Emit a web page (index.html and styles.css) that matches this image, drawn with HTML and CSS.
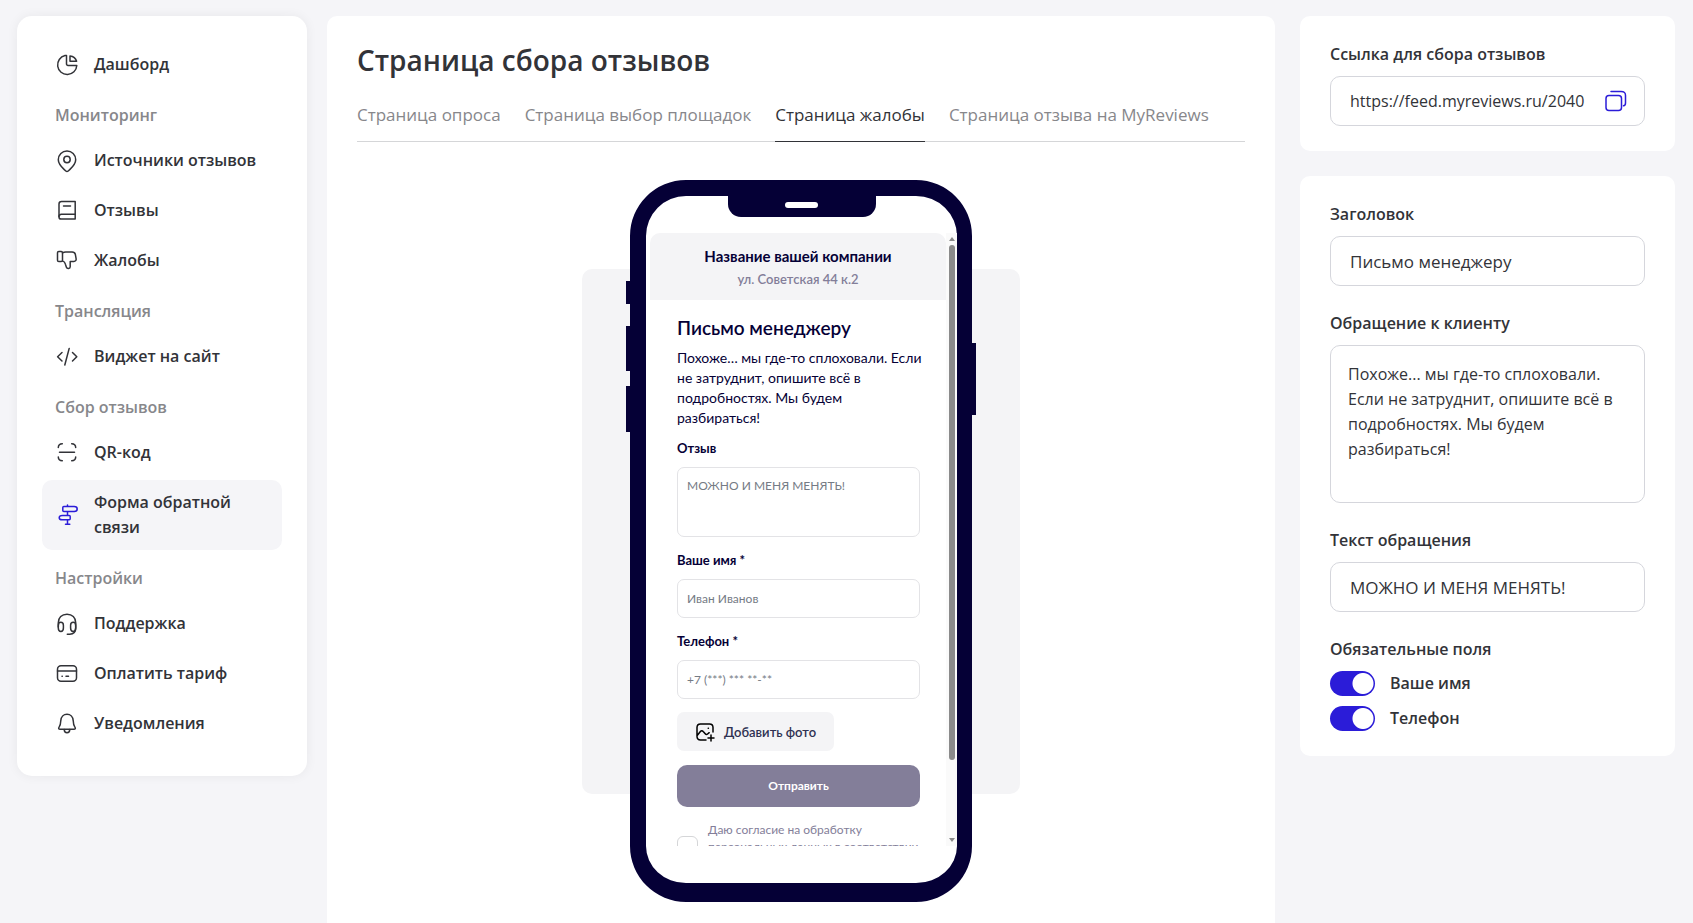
FILE: index.html
```
<!DOCTYPE html>
<html lang="ru">
<head>
    <meta charset="UTF-8">
    <meta name="viewport" content="width=device-width, initial-scale=1.0">
    <title>Страница сбора отзывов</title>
    <link rel="stylesheet" href="styles.css">
</head>
<body>
    <div class="layout">
        <!-- Боковое меню -->
        <nav class="sidebar">
            <a class="menu-item" href="#">
                <svg class="icon" viewBox="0 0 24 24"><path d="M11.5 2.500v8.500a1.500 1.500 0 0 0 1.500 1.500h8.800A9.600 9.600 0 1 1 10 2.600c.8-.2 1.500-.1 1.500-.1z"/><path d="M15 2.900v5.400h6.600C20.800 5.500 18.500 3.300 15 2.900z"/></svg>
                <span>Дашборд</span>
            </a>
            <h3 class="menu-title">Мониторинг</h3>
            <a class="menu-item" href="#">
                <svg class="icon" viewBox="0 0 24 24"><path d="M12 2a8.700 8.700 0 0 0-8.700 8.700c0 4 2.700 6.800 6 9.900l1.500 1.400a1.800 1.800 0 0 0 2.400 0l1.500-1.400c3.300-3.100 6-5.900 6-9.900A8.700 8.700 0 0 0 12 2z"/><circle cx="12" cy="10.500" r="3.200"/></svg>
                <span>Источники отзывов</span>
            </a>
            <a class="menu-item" href="#">
                <svg class="icon" viewBox="0 0 24 24"><path d="M6.500 2.500h13.700v17.600H6.200A2.200 2.200 0 0 1 4 17.900V5A2.500 2.500 0 0 1 6.500 2.500z"/><path d="M4 17.500a2.400 2.400 0 0 1 2.400-2.300h13.800M8.500 7.100h7"/></svg>
                <span>Отзывы</span>
            </a>
            <a class="menu-item" href="#">
                <svg class="icon" viewBox="0 0 24 24"><path d="M3.800 2.500h2.400c1 0 1.300.4 1.300 1.300v7.500c0 .9-.4 1.300-1.300 1.300H3.800c-.9 0-1.300-.4-1.300-1.300V3.800c0-.9.4-1.300 1.300-1.300z"/><path d="M7.500 3.800c1-.6 2-.9 3.200-.9h6.500c1.700 0 2.700.7 3.100 2.300l.8 4.500c.3 1.600-.6 2.700-2.200 2.700h-3.700v5.400c0 2-3.200 2.300-3.800.4l-.9-2.800c-.4-1.600-1.400-2.900-3-3.500"/></svg>
                <span>Жалобы</span>
            </a>
            <h3 class="menu-title">Трансляция</h3>
            <a class="menu-item" href="#">
                <svg class="icon" viewBox="0 0 24 24"><path d="M7 7.500 2.600 11.700 7 16M17.500 7.500l4.300 4.200-4.300 4.300M14.200 3.400 9.800 20"/></svg>
                <span>Виджет на сайт</span>
            </a>
            <h3 class="menu-title">Сбор отзывов</h3>
            <a class="menu-item" href="#">
                <svg class="icon" viewBox="0 0 24 24"><path d="M3.300 6.500c.1-2.800 1-3.700 4-3.800M16.700 2.700c3 .1 3.900 1 4 3.800M20.700 16c-.1 2.800-1 3.700-4 3.800M7.300 19.800c-3-.1-3.900-1-4-3.800M4.500 11.300h15"/></svg>
                <span>QR-код</span>
            </a>
            <a class="menu-item active" href="#">
                <svg class="icon" viewBox="0 0 24 24"><path d="M12.500 2v1.500M12.500 8.500v4M12.500 16.800V21M10.500 21.300h4.300M8.800 3.500h10.400c1.800 0 3 1.100 3 2.500s-1.200 2.500-3 2.500H8.800a1 1 0 0 1-1-1v-3a1 1 0 0 1 1-1zM14.200 12.500a1 1 0 0 1 1 1v2.300a1 1 0 0 1-1 1H7.500c-1.900 0-3.300-.8-3.300-2.100s1.400-2.200 3.300-2.200z"/></svg>
                <span>Форма обратной связи</span>
            </a>
            <h3 class="menu-title">Настройки</h3>
            <a class="menu-item" href="#">
                <svg class="icon" viewBox="0 0 24 24"><path d="M3.300 15V10.700C3.300 5.700 6.800 2.200 12 2.200s8.700 3.500 8.700 8.500V16c0 3.800-2.200 6.200-6 6.200h-2.400"/><path d="M3.300 13.500c0-2.400 1-3.200 2.500-3.200s2.600.8 2.600 2.900V16c0 2.300-1 3.400-2.500 3.400s-2.600-.9-2.600-3.400zM20.700 13.500c0-2.400-1-3.200-2.500-3.200s-2.600.8-2.600 2.900V16c0 2.300 1 3.400 2.500 3.400s2.600-.9 2.600-3.400z"/></svg>
                <span>Поддержка</span>
            </a>
            <a class="menu-item" href="#">
                <svg class="icon" viewBox="0 0 24 24"><rect x="2.500" y="3.800" width="19" height="15.400" rx="3.500"/><path d="M2.500 9h19M7 14.300h.3M11 14.300h2.500"/></svg>
                <span>Оплатить тариф</span>
            </a>
            <a class="menu-item" href="#">
                <svg class="icon" viewBox="0 0 24 24"><path d="M12 2.300c-3.400 0-6 2.700-6.200 6.300-.1 3-.2 4.600-1.700 6.500-.9 1.200-.4 2.200 1 2.200h13.800c1.400 0 1.900-1 1-2.200-1.500-1.900-1.600-3.500-1.700-6.500C18 5 15.400 2.300 12 2.300z"/><path d="M9.200 17.500c.1 4.300 5.500 4.300 5.600 0"/></svg>
                <span>Уведомления</span>
            </a>
        </nav>

        <!-- Предпросмотр страницы -->
        <main class="content">
            <h1>Страница сбора отзывов</h1>
            <div class="tabs">
                <a class="tab" href="#">Страница опроса</a>
                <a class="tab" href="#">Страница выбор площадок</a>
                <a class="tab active" href="#">Страница жалобы</a>
                <a class="tab" href="#">Страница отзыва на MyReviews</a>
            </div>

            <div class="preview">
                <div class="phone">
                    <span class="phone-key key-mute"></span>
                    <span class="phone-key key-up"></span>
                    <span class="phone-key key-down"></span>
                    <span class="phone-key key-power"></span>
                    <div class="notch"><span class="speaker"></span></div>
                    <div class="screen">
                        <div class="page">
                            <header class="company">
                                <p class="company-name">Название вашей компании</p>
                                <p class="company-address">ул. Советская 44 к.2</p>
                            </header>
                            <form class="complaint">
                                <h2>Письмо менеджеру</h2>
                                <p class="complaint-text">Похоже… мы где-то сплоховали. Если не затруднит, опишите всё в подробностях. Мы будем разбираться!</p>
                                <label for="review">Отзыв</label>
                                <textarea id="review" placeholder="МОЖНО И МЕНЯ МЕНЯТЬ!"></textarea>
                                <label for="name">Ваше имя *</label>
                                <input type="text" id="name" placeholder="Иван Иванов">
                                <label for="phone">Телефон *</label>
                                <input type="tel" id="phone" placeholder="+7 (***) *** **-**">
                                <button type="button" class="add-photo">
                                    <svg viewBox="0 0 20 20"><path d="M18 10V5.500C18 3 17 2 14.500 2h-9C3 2 2 3 2 5.500v8.800C2 17 3 18 5.500 18H11M2.200 13.500l3.200-4c.8-1 2-1 2.800 0l2 2.300c.7.8 1.600.9 2.400.2l1.600-1.300M16 13v6M13 16h6M13.200 6.200h.2"/></svg>
                                    <span>Добавить фото</span>
                                </button>
                                <button type="button" class="send">Отправить</button>
                                <div class="consent">
                                    <input type="checkbox" id="consent">
                                    <label for="consent">Даю согласие на обработку персональных данных в соответствии с политикой</label>
                                </div>
                            </form>
                        </div>
                        <div class="scrollbar">
                            <span class="arrow-up"></span>
                            <span class="thumb"></span>
                            <span class="arrow-down"></span>
                        </div>
                    </div>
                </div>
            </div>
        </main>

        <!-- Настройки формы -->
        <aside class="settings">
            <section class="card">
                <label class="field-title" for="link">Ссылка для сбора отзывов</label>
                <div class="link-box">
                    <input type="text" id="link" value="https://feed.myreviews.ru/20401">
                    <button type="button" class="copy" aria-label="Скопировать">
                        <svg viewBox="0 0 24 24"><rect x="2" y="6.500" width="15.500" height="15" rx="3"/><path d="M7 2.500h10c3.500 0 4.500 1 4.500 4V14c0 1.700-.6 2.600-2 2.800"/></svg>
                    </button>
                </div>
            </section>

            <section class="card">
                <label class="field-title" for="title">Заголовок</label>
                <input class="field" type="text" id="title" value="Письмо менеджеру">
                <label class="field-title" for="message">Обращение к клиенту</label>
                <textarea class="field" id="message">Похоже... мы где-то сплоховали. Если не затруднит, опишите всё в подробностях. Мы будем разбираться!</textarea>
                <label class="field-title" for="hint">Текст обращения</label>
                <input class="field" type="text" id="hint" value="МОЖНО И МЕНЯ МЕНЯТЬ!">
                <h4 class="field-title">Обязательные поля</h4>
                <label class="switch"><input type="checkbox" checked> <span>Ваше имя</span></label>
                <label class="switch"><input type="checkbox" checked> <span>Телефон</span></label>
            </section>
        </aside>
    </div>
</body>
</html>
```
FILE: styles.css
```
* {
    box-sizing: border-box;
}
body {
    margin: 0;
    background-color: #f5f5f8;
    color: #323338;
    font-family: "Open Sans", "Noto Sans", sans-serif;
    font-size: 17px;
    line-height: 25px;
}
h1, h2, h3, h4, p {
    margin: 0;
}
a {
    color: inherit;
    text-decoration: none;
}
input, textarea, button {
    font: inherit;
    color: inherit;
}
svg {
    fill: none;
    stroke: currentColor;
    stroke-width: 1.5;
    stroke-linecap: round;
    stroke-linejoin: round;
}
.layout {
    display: flex;
    align-items: flex-start;
    min-height: 100vh;
    padding: 16px 18px 0 17px;
}

/* меню */
.sidebar {
    flex: 0 0 290px;
    margin-right: 20px;
    padding: 26px 25px 30px;
    border-radius: 15px;
    background-color: #fff;
    box-shadow: 0 0 12px rgba(0, 0, 0, 0.06);
}
.menu-item {
    display: flex;
    align-items: center;
    gap: 15px;
    margin-bottom: 5px;
    padding: 10px 13px;
    border-radius: 10px;
    font-size: 16px;
    font-weight: 600;
}
.menu-item:last-child {
    margin-bottom: 0;
}
.menu-item.active {
    background-color: #f5f5f8;
}
.menu-item.active .icon {
    color: #2b1cd8;
}
.icon {
    flex: none;
    width: 24px;
    height: 24px;
}
.menu-title {
    padding-left: 13px;
    color: #87878b;
    font-size: 16px;
    font-weight: 600;
    line-height: 46px;
}

/* центральная часть */
.content {
    flex: 1;
    min-width: 0;
    min-height: calc(100vh - 16px);
    padding: 24px 30px 20px;
    border-radius: 10px 10px 0 0;
    background-color: #fff;
}
h1 {
    font-size: 28px;
    font-weight: 600;
    line-height: 40px;
}
.tabs {
    display: flex;
    gap: 24px;
    margin-top: 22px;
    border-bottom: 1px solid #d5d6d8;
}
.tab {
    margin-bottom: -1px;
    padding-bottom: 14px;
    border-bottom: 1px solid transparent;
    color: #87878b;
}
.tab.active {
    border-color: #323338;
    color: #323338;
}
.preview {
    display: flex;
    justify-content: center;
    width: 438px;
    height: 525px;
    margin: 127px auto 0;
    border-radius: 10px;
    background-color: #f4f4f6;
}

/* телефон */
.phone {
    position: relative;
    flex: none;
    width: 342px;
    height: 722px;
    margin-top: -89px;
    padding: 37px 0 0 4px;
    border: 16px solid #050036;
    border-right-width: 15px;
    border-bottom-width: 19px;
    border-radius: 56px;
    background-color: #fff;
    color: #050036;
    font-family: Lato, "Open Sans", sans-serif;
    font-size: 13px;
    line-height: 20px;
}
.phone-key {
    position: absolute;
    left: -20px;
    width: 4px;
    background-color: #050036;
}
.key-mute {
    top: 85px;
    height: 23px;
}
.key-up {
    top: 130px;
    height: 45px;
}
.key-down {
    top: 190px;
    height: 46px;
}
.key-power {
    top: 147px;
    left: auto;
    right: -19px;
    height: 72px;
}
.notch {
    position: absolute;
    top: -1px;
    left: 50%;
    display: flex;
    justify-content: center;
    width: 148px;
    height: 22px;
    margin-left: -74px;
    padding-top: 7px;
    border-radius: 0 0 13px 13px;
    background-color: #050036;
}
.speaker {
    width: 33px;
    height: 6px;
    border-radius: 3px;
    background-color: #fff;
}
.screen {
    display: flex;
    height: 613px;
    overflow: hidden;
}
.page {
    flex: 1;
}
.company {
    height: 67px;
    padding-top: 13px;
    border-radius: 10px 10px 0 0;
    background-color: #f4f4f6;
    text-align: center;
}
.company-name {
    font-size: 15px;
    font-weight: 700;
}
.company-address {
    padding-top: 3px;
    color: #837e99;
    font-size: 13px;
    font-weight: 600;
}
.complaint {
    display: flex;
    flex-direction: column;
    padding: 15px 26px 0 27px;
}
.complaint h2 {
    font-size: 19px;
    font-weight: 600;
    line-height: 26px;
}
.complaint-text {
    margin: 7px -4px 10px 0;
    font-size: 14px;
}
.complaint > label {
    margin-bottom: 9px;
    font-weight: 700;
}
.complaint > input, .complaint > textarea {
    width: 100%;
    height: 39px;
    margin: 0 0 13px;
    padding: 0 9px;
    border: 1px solid #e3e3e6;
    border-radius: 7px;
    outline: none;
    background-color: #fff;
    font-size: 12px;
    resize: none;
}
.complaint > textarea {
    height: 70px;
    padding-top: 8px;
}
::placeholder {
    color: #757b85;
    opacity: 1;
}
.add-photo {
    display: flex;
    align-items: center;
    align-self: flex-start;
    gap: 9px;
    height: 39px;
    padding: 0 18px;
    border: none;
    border-radius: 7px;
    background-color: #f4f4f6;
    color: #2f3152;
    font-weight: 600;
}
.add-photo svg {
    width: 20px;
    height: 20px;
    color: #000;
}
.send {
    height: 42px;
    margin-top: 14px;
    border: none;
    border-radius: 10px;
    background-color: #837e99;
    color: #fff;
    font-size: 12px;
    font-weight: 700;
}
.consent {
    display: flex;
    align-items: center;
    gap: 10px;
    margin-top: 14px;
    color: #837e99;
    font-size: 12px;
    line-height: 17px;
}
.consent input {
    flex: none;
    appearance: none;
    width: 21px;
    height: 21px;
    margin: 0;
    border: 1px solid #d5d6d8;
    border-radius: 6px;
}
.scrollbar {
    display: flex;
    flex-direction: column;
    align-items: center;
    width: 11px;
    padding: 4px 0;
    background-color: #fafafa;
}
.arrow-up, .arrow-down {
    border: 3px solid transparent;
}
.arrow-up {
    border-top: none;
    border-bottom: 4px solid #8b8b8b;
}
.arrow-down {
    margin-top: auto;
    border-bottom: none;
    border-top: 4px solid #8b8b8b;
}
.thumb {
    width: 6px;
    height: 515px;
    margin-top: 4px;
    border-radius: 3px;
    background-color: #8b8b8b;
}

/* правая колонка */
.settings {
    flex: 0 0 375px;
    margin-left: 25px;
}
.card {
    display: flex;
    flex-direction: column;
    margin-bottom: 25px;
    padding: 26px 30px 25px;
    border-radius: 10px;
    background-color: #fff;
}
.field-title {
    margin-bottom: 9px;
    font-size: 16px;
    font-weight: 600;
}
.field, .link-box {
    width: 100%;
    height: 50px;
    margin-bottom: 25px;
    padding: 0 19px;
    border: 1px solid #d5d6dc;
    border-radius: 10px;
    outline: none;
    background-color: #fff;
}
textarea.field {
    height: 158px;
    padding: 16px 17px;
    font-size: 16px;
    resize: none;
}
.link-box {
    display: flex;
    align-items: center;
    justify-content: space-between;
    margin-bottom: 0;
    padding-right: 16px;
}
.link-box input {
    width: 235px;
    padding: 0;
    border: none;
    outline: none;
    font-size: 16px;
}
.copy {
    display: flex;
    padding: 0;
    border: none;
    background: none;
    color: #2b1cd8;
    cursor: pointer;
}
.copy svg {
    width: 24px;
    height: 24px;
}
.switch {
    display: flex;
    align-items: center;
    gap: 15px;
    margin-bottom: 10px;
    font-size: 16px;
    font-weight: 600;
}
.switch:last-child {
    margin-bottom: 0;
}
.switch input {
    appearance: none;
    width: 45px;
    height: 25px;
    margin: 0;
    border-radius: 13px;
    background: radial-gradient(circle at 33px 50%, #fff 10px, #2b1cd8 11px);
}
```
